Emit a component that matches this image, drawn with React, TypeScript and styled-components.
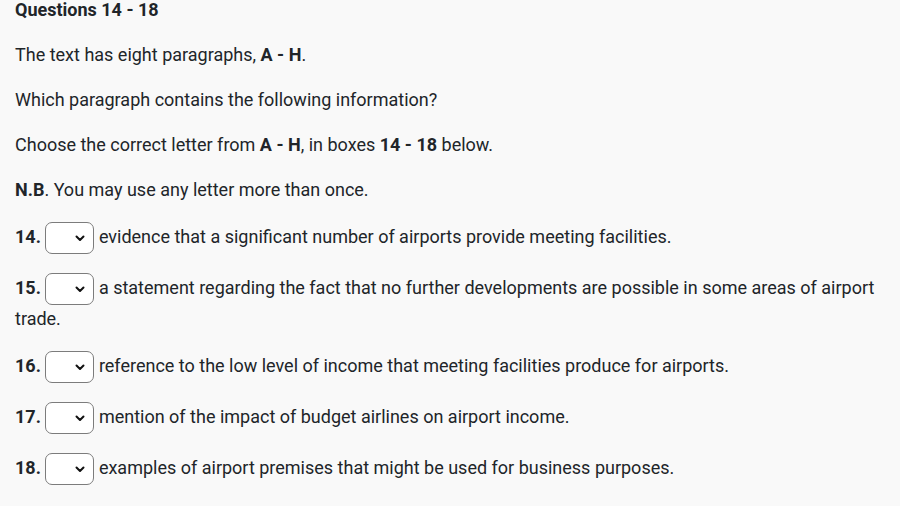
import styled, { createGlobalStyle } from 'styled-components'

const GlobalStyle = createGlobalStyle`
  html, body {
    margin: 0;
    padding: 0;
    background: #f9f9f9;
  }
  body {
    font-family: Roboto, "Liberation Sans", Arial, sans-serif;
    color: #212529;
  }
`

const Page = styled.div`
  padding: 0 15px;
  font-size: 18px;
  line-height: 27px;
`

const Title = styled.h3`
  margin: 0 0 21px;
  font-size: 18px;
  font-weight: 700;
  line-height: 20px;
`

const Para = styled.p`
  margin: 0 0 18px;
`

const List = styled.div`
  padding-top: 1px;
`

const Question = styled.div`
  margin-bottom: 19px;
`

const Num = styled.b`
  font-weight: 700;
`

const SelectWrap = styled.span`
  position: relative;
  display: inline-block;
  vertical-align: middle;
  margin: 0 5px 0 4px;
  width: 49px;
  height: 32px;
`

const Select = styled.select`
  appearance: none;
  display: block;
  width: 100%;
  height: 100%;
  box-sizing: border-box;
  border: 1px solid #7c7c7c;
  border-radius: 7px;
  background: #fff;
  font: inherit;
  padding: 0 6px;
  color: #212529;
`

const Chevron = styled.svg`
  position: absolute;
  right: 9px;
  top: 13px;
  width: 10px;
  height: 7px;
  pointer-events: none;
`

type Q = { n: number; text: string }

const questions: Q[] = [
  { n: 14, text: 'evidence that a significant number of airports provide meeting facilities.' },
  {
    n: 15,
    text: 'a statement regarding the fact that no further developments are possible in some areas of airport trade.'
  },
  { n: 16, text: 'reference to the low level of income that meeting facilities produce for airports.' },
  { n: 17, text: 'mention of the impact of budget airlines on airport income.' },
  { n: 18, text: 'examples of airport premises that might be used for business purposes.' }
]

const Dropdown = () => (
  <SelectWrap>
    <Select defaultValue="">
      <option value=""></option>
      {'ABCDEFGH'.split('').map(l => (
        <option key={l} value={l}>
          {l}
        </option>
      ))}
    </Select>
    <Chevron viewBox="0 0 10 7">
      <path d="M1.5 1.5 L5 5 L8.5 1.5" fill="none" stroke="#111" strokeWidth="2" strokeLinecap="round" strokeLinejoin="round" />
    </Chevron>
  </SelectWrap>
)

export default function App() {
  return (
    <Page>
      <GlobalStyle />
      <Title>Questions 14 - 18</Title>
      <Para>
        The text has eight paragraphs, <b>A - H</b>.
      </Para>
      <Para>Which paragraph contains the following information?</Para>
      <Para>
        Choose the correct letter from <b>A - H</b>, in boxes <b>14 - 18</b> below.
      </Para>
      <Para>
        <b>N.B</b>. You may use any letter more than once.
      </Para>
      <List>
        {questions.map(q => (
          <Question key={q.n}>
            <Num>{q.n}.</Num>
            <Dropdown />
            {q.text}
          </Question>
        ))}
      </List>
    </Page>
  )
}
